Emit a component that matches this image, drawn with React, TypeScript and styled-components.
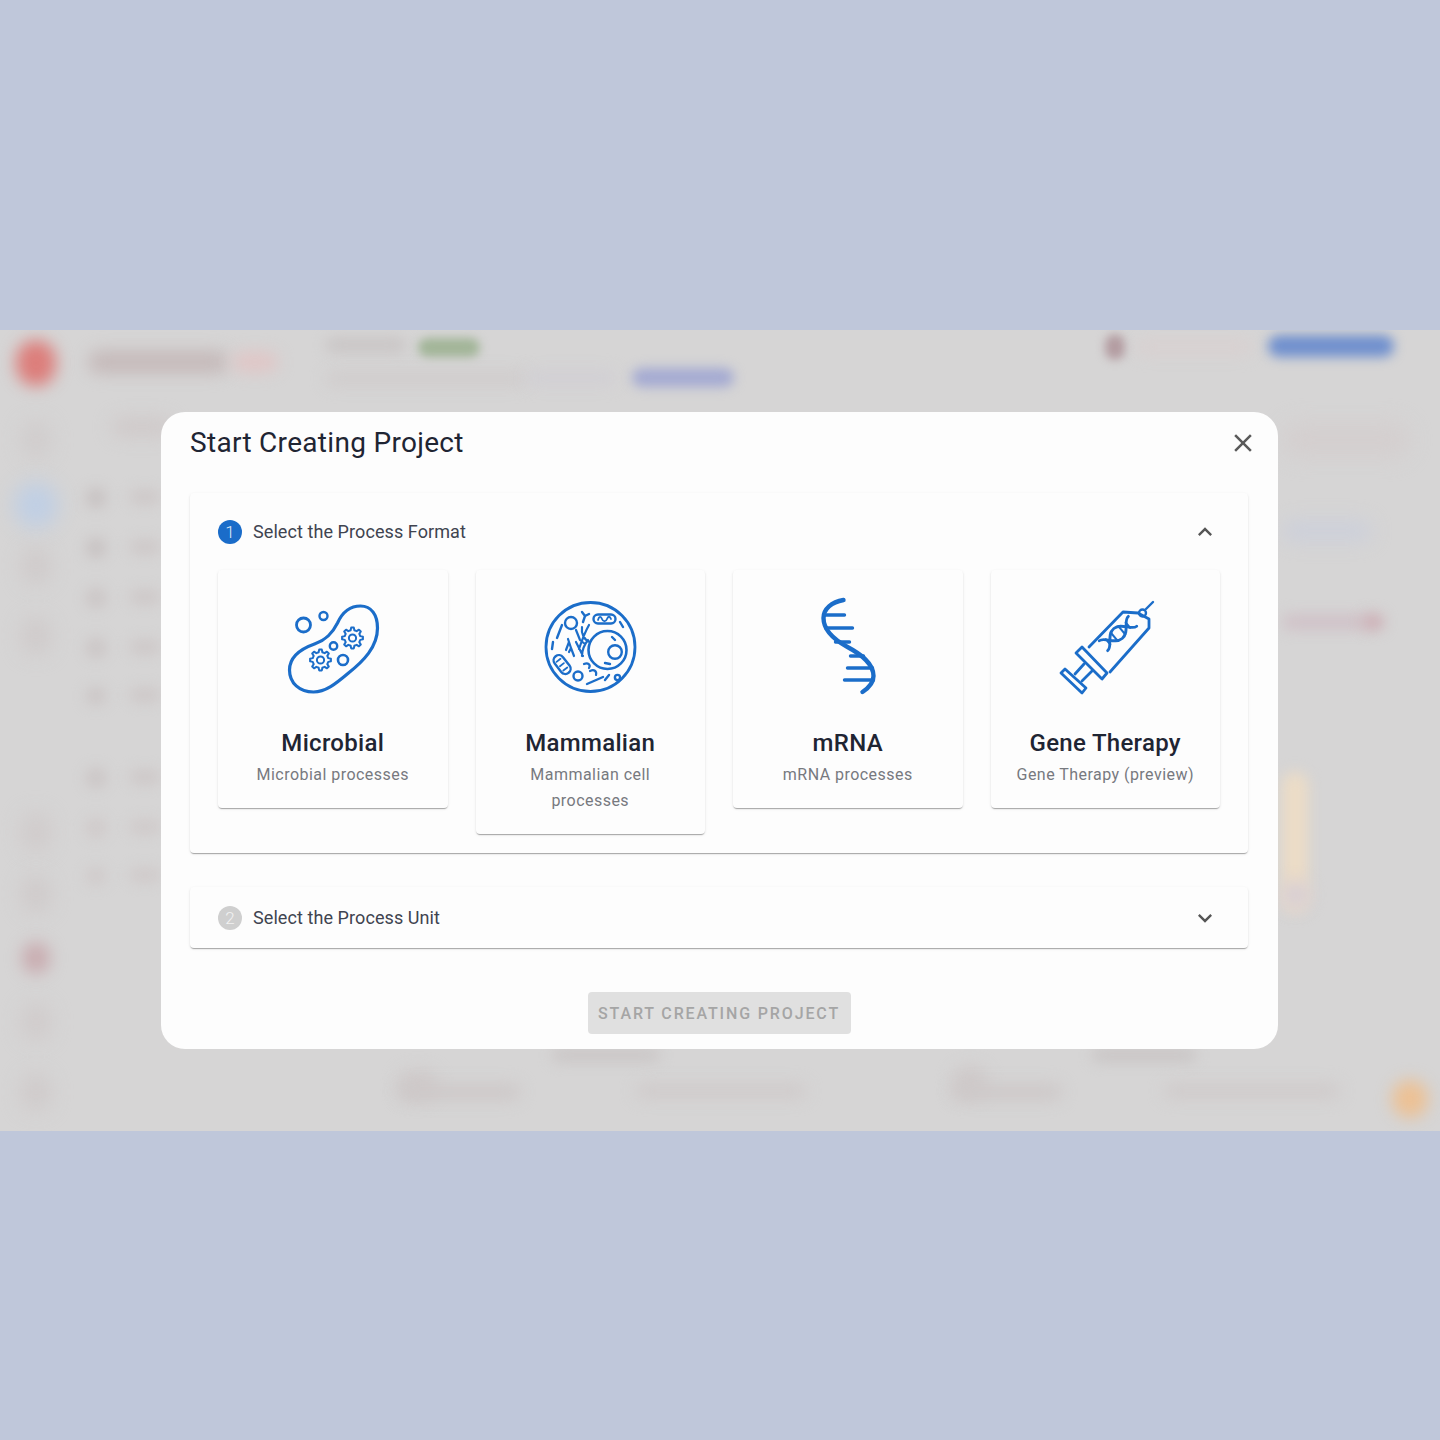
import React from 'react';
import styled, { createGlobalStyle } from 'styled-components';

const GlobalStyle = createGlobalStyle`
  html, body {
    margin: 0;
    padding: 0;
    background: #bfc7da;
    font-family: Roboto, "Liberation Sans", sans-serif;
  }
`;

const Page = styled.div`
  width: 1440px;
  height: 1440px;
  box-sizing: border-box;
  padding-top: 330px;
`;

const Band = styled.div`
  position: relative;
  width: 1440px;
  height: 801px;
  overflow: hidden;
  background: #d6d5d5;
  display: flex;
  align-items: center;
  justify-content: center;
`;

const Blob = styled.div<{ $x: number; $y: number; $w: number; $h: number; $c: string; $b: number }>`
  position: absolute;
  left: ${(p) => p.$x}px;
  top: ${(p) => p.$y - 330}px;
  width: ${(p) => p.$w}px;
  height: ${(p) => p.$h}px;
  background: ${(p) => p.$c};
  border-radius: ${(p) => Math.min(p.$w, p.$h) / 2}px;
  filter: blur(${(p) => p.$b}px);
`;

const Modal = styled.div`
  position: relative;
  width: 1117px;
  height: 637px;
  margin-right: 1px;
  box-sizing: border-box;
  padding: 0 30px 0 29px;
  background: #fdfdfd;
  border-radius: 24px;
`;

const ModalHead = styled.div`
  height: 81px;
  box-sizing: border-box;
  padding-top: 14px;
  display: flex;
  justify-content: space-between;
  align-items: flex-start;
`;

const Title = styled.h2`
  margin: 0;
  font-size: 28px;
  line-height: 34px;
  font-weight: 400;
  letter-spacing: 0.3px;
  color: #1f2533;
`;

const CloseButton = styled.div`
  width: 30px;
  height: 30px;
  margin: 2px -10px 0 0;
  color: #5a5a5a;
`;

const Section = styled.section`
  background: #fdfdfd;
  border-radius: 4px;
  box-shadow: 0 2px 1px -1px rgba(0, 0, 0, 0.22), 0 1px 1px 0 rgba(0, 0, 0, 0.1), 0 1px 3px 0 rgba(0, 0, 0, 0.1);
  margin-bottom: 34px;
`;

const SectionHead = styled.div<{ $open?: boolean }>`
  height: ${(p) => (p.$open ? 77 : 61)}px;
  box-sizing: border-box;
  padding: 0 29px 0 28px;
  display: flex;
  align-items: center;
`;

const StepBadge = styled.div<{ $active?: boolean }>`
  width: 24px;
  height: 24px;
  border-radius: 50%;
  background: ${(p) => (p.$active ? '#1a6cc9' : '#cfcfcf')};
  color: ${(p) => (p.$active ? '#dfe9f6' : '#f2f2f2')};
  font-size: 17px;
  font-weight: 300;
  line-height: 25px;
  text-align: center;
`;

const StepLabel = styled.div`
  flex: 1;
  margin-left: 11px;
  font-size: 18px;
  line-height: 24px;
  letter-spacing: 0.08px;
  color: #3f4450;
`;

const Chevron = styled.div`
  width: 28px;
  height: 28px;
  color: #555;
`;

const CardGrid = styled.div`
  display: grid;
  grid-template-columns: repeat(4, 1fr);
  gap: 28px;
  align-items: start;
  padding: 0 28px 19px;
`;

const Card = styled.div`
  box-sizing: border-box;
  padding: 20px 24px 20px;
  background: #fdfdfd;
  border-radius: 4px;
  box-shadow: 0 2px 1px -1px rgba(0, 0, 0, 0.22), 0 1px 1px 0 rgba(0, 0, 0, 0.1), 0 1px 3px 0 rgba(0, 0, 0, 0.1);
  text-align: center;
`;

const IconSvg = styled.svg`
  display: block;
  width: 120px;
  height: 110px;
  margin: 0 auto 27px;
  color: #1b6dc9;
  fill: none;
  stroke: currentColor;
  stroke-linecap: round;
  stroke-linejoin: round;
`;

const CardName = styled.div`
  font-size: 24px;
  line-height: 32px;
  font-weight: 500;
  letter-spacing: 0.3px;
  color: #1f2533;
`;

const CardDesc = styled.div`
  font-size: 16px;
  line-height: 26px;
  margin-top: 3px;
  letter-spacing: 0.46px;
  color: #77797f;
`;

const Footer = styled.div`
  display: flex;
  justify-content: center;
  padding-top: 10px;
`;

const StartButton = styled.button`
  width: 263px;
  height: 42px;
  padding: 0;
  border: none;
  border-radius: 4px;
  background: #e0e0e0;
  color: #a5a5a5;
  font-family: inherit;
  font-size: 16px;
  font-weight: 500;
  letter-spacing: 1.86px;
  text-transform: uppercase;
`;

const blobs: [number, number, number, number, string, number][] = [
  [16, 340, 40, 46, '#dc7e7b', 8],
  [88, 350, 140, 24, '#c6bbbb', 8],
  [232, 352, 46, 20, '#e0c6c6', 8],
  [326, 338, 80, 14, '#c8c4c4', 7],
  [418, 338, 62, 19, '#a2b598', 5],
  [326, 372, 200, 13, '#cfcbcb', 8],
  [526, 372, 90, 12, '#d0ced4', 8],
  [632, 368, 102, 19, '#a4aad2', 6],
  [1105, 334, 20, 26, '#b39ca1', 5],
  [1136, 340, 116, 14, '#d9d0d0', 8],
  [1268, 335, 126, 22, '#7090ce', 6],
  [1282, 422, 128, 36, '#d4cfcf', 10],
  [1282, 520, 90, 22, '#cdd0da', 9],
  [1282, 614, 86, 16, '#d0c2c8', 7],
  [1362, 614, 22, 16, '#cdadb4', 7],
  [1282, 772, 26, 140, '#ecdcc6', 7],
  [1282, 880, 28, 30, '#d8cfd4', 8],
  [112, 418, 60, 18, '#cfc9c9', 9],
  [22, 422, 28, 36, '#d0cccc', 10],
  [14, 482, 44, 46, '#c0cfe4', 10],
  [22, 548, 28, 36, '#cfcaca', 10],
  [22, 618, 28, 36, '#cfcaca', 10],
  [86, 488, 20, 20, '#c6c0c0', 7],
  [130, 490, 30, 14, '#cdc7c7', 7],
  [86, 538, 20, 20, '#c6c0c0', 7],
  [130, 540, 30, 14, '#cdc7c7', 7],
  [86, 588, 20, 20, '#cac4c4', 7],
  [130, 590, 30, 14, '#cdc7c7', 7],
  [86, 638, 20, 20, '#cac4c4', 7],
  [130, 640, 30, 14, '#cdc7c7', 7],
  [86, 688, 20, 16, '#cac4c4', 7],
  [130, 688, 30, 14, '#cdc7c7', 7],
  [86, 768, 20, 20, '#cac4c4', 7],
  [130, 770, 30, 14, '#cdc7c7', 7],
  [86, 818, 20, 20, '#cfc9c9', 7],
  [130, 820, 30, 14, '#cfc9c9', 7],
  [86, 868, 20, 16, '#cfc9c9', 7],
  [130, 868, 30, 14, '#cfc9c9', 7],
  [22, 813, 28, 38, '#d0cbcb', 10],
  [22, 876, 28, 36, '#cfcaca', 10],
  [22, 942, 28, 32, '#c9adb1', 8],
  [22, 1004, 28, 36, '#d0cbcb', 10],
  [22, 1074, 28, 36, '#cfcaca', 10],
  [552, 1048, 108, 14, '#cac6c6', 7],
  [398, 1070, 40, 30, '#cfcaca', 8],
  [398, 1084, 122, 16, '#cdc8c8', 8],
  [636, 1084, 170, 14, '#cfcaca', 8],
  [952, 1066, 36, 32, '#cfcaca', 8],
  [952, 1084, 110, 16, '#cdc8c8', 8],
  [1092, 1048, 104, 14, '#c9c5c5', 7],
  [1164, 1084, 176, 14, '#cfcaca', 8],
  [1392, 1080, 36, 38, '#ecc195', 8],
];

// cog outline used by the microbial icon
const gearPoints = (cx: number, cy: number, r: number, teeth: number) => {
  const pts: string[] = [];
  const inner = r * 0.76;
  for (let i = 0; i < teeth; i++) {
    const step = (Math.PI * 2) / teeth;
    const a = i * step;
    [
      [inner, a - step * 0.3],
      [r, a - step * 0.16],
      [r, a + step * 0.16],
      [inner, a + step * 0.3],
    ].forEach(([rad, ang]) => {
      pts.push(`${(cx + rad * Math.cos(ang)).toFixed(2)},${(cy + rad * Math.sin(ang)).toFixed(2)}`);
    });
  }
  return pts.join(' ');
};

const MicrobialIcon = () => (
  <IconSvg viewBox="0 0 120 110">
    <g transform="translate(2.5 5)">
      <path
        strokeWidth="3.2"
        d="M14 75C14 62 25 54 39 49C51 45 57 38 62 28C67 17 75 11 85 11C96 11 102 20 102 33C102 52 88 66 73 78C60 89 50 97 38 97C24 97 14 88 14 75Z"
      />
      <circle cx="28" cy="30" r="7" strokeWidth="2.8" />
      <circle cx="48" cy="21" r="4" strokeWidth="2.4" />
      <circle cx="58" cy="51" r="3.7" strokeWidth="2.4" />
      <circle cx="67.5" cy="65" r="5" strokeWidth="2.6" />
      <polygon points={gearPoints(77, 43, 10.5, 8)} strokeWidth="2" />
      <circle cx="77" cy="43" r="3.6" strokeWidth="2" />
      <polygon points={gearPoints(45, 65, 10.5, 8)} strokeWidth="2" />
      <circle cx="45" cy="65" r="3.6" strokeWidth="2" />
    </g>
  </IconSvg>
);

const CellIcon = () => (
  <IconSvg viewBox="0 0 120 110">
    <circle cx="60.5" cy="57" r="44.500" strokeWidth="2.8" />
    <circle cx="77.500" cy="60" r="19" strokeWidth="2.6" />
    <circle cx="85" cy="62" r="6.800" strokeWidth="2.4" />
    <circle cx="41" cy="33" r="6" strokeWidth="2.4" />
    <circle cx="48" cy="86" r="4.500" strokeWidth="2.4" />
    <circle cx="87.500" cy="87.500" r="2.600" strokeWidth="2.4" />
    <rect x="63.500" y="24.500" width="22" height="9" rx="4.500" strokeWidth="2.4" />
    <path strokeWidth="1.8" d="M68 30C69 26 71 26 72 29C73 32 76 32 77 29C78 26 80 26 81 29" />
    <g transform="rotate(52 32 74)">
      <rect x="22" y="69" width="21" height="10.500" rx="5.200" strokeWidth="2.4" />
      <path strokeWidth="1.8" d="M27 77V72M32.500 77V72M38 77V72" />
    </g>
    <path strokeWidth="2.4" d="M32 35L27 48M23 52L22 59M52 22L55 26L53 32M55 26L59 24M90 32L93 37" />
    <path strokeWidth="2.4" d="M57 94L73 87M75 90L79 85M82 47L85 50M75 73L80 74" />
    <path strokeWidth="2.2" d="M38 49L41 58L39 62M41 58L44 66M39 52L36 60" />
    <path strokeWidth="2.2" d="M46 40L50 50L55 54M52 37C51 44 54 50 60 52M59 35C55 42 52 50 49 59M52 66C52 60 54 55 58 50M46 52L53 66" />
    <path strokeWidth="2.2" d="M54 74C58 72 61 75 59 78M60 81C64 79 67 81 66 85" />
  </IconSvg>
);

const DnaIcon = () => (
  <IconSvg viewBox="0 0 120 110">
    <g transform="translate(12.5 -10)">
      <path
        strokeWidth="4.4"
        d="M43 20C31 22 23 29 23 38C23 52 36 61 47 67C60 74 73 83 73 96C73 102 68 108 62 112"
      />
      <path strokeWidth="3.4" d="M25 35H44M25 48H52M35 62H49M50 76H63M47 88H72M44 100H73" />
    </g>
  </IconSvg>
);

const SyringeIcon = () => (
  <IconSvg viewBox="0 0 120 110">
    <g transform="translate(5 0)">
      <path strokeWidth="2.8" d="M39 57L73 22L88 23L99 29L99 38L60 82" />
      <path strokeWidth="2.8" d="M26 63L32 57L57 83L52 89Z" />
      <path strokeWidth="2.8" d="M34 74L25 84M42 81L32 91" />
      <path strokeWidth="2.8" d="M11 83L15 79L36 98L32 103Z" />
      <circle cx="92.500" cy="23" r="3.500" strokeWidth="2.4" />
      <path strokeWidth="2.4" d="M96 19L103 12" />
      <g transform="rotate(-40 68 43.500)">
        <path strokeWidth="2.8" d="M49 37C56 37 58 50 68 50C78 50 80 37 87 37" />
        <path strokeWidth="2.8" d="M49 50C56 50 58 37 68 37C78 37 80 50 87 50" />
        <path strokeWidth="2" d="M55 40V47M63 38V49M73 38V49M81 40V47" />
      </g>
    </g>
  </IconSvg>
);

const cards = [
  { name: 'Microbial', desc: 'Microbial processes', Icon: MicrobialIcon },
  { name: 'Mammalian', desc: 'Mammalian cell processes', Icon: CellIcon },
  { name: 'mRNA', desc: 'mRNA processes', Icon: DnaIcon },
  { name: 'Gene Therapy', desc: 'Gene Therapy (preview)', Icon: SyringeIcon },
];

const MuiIcon = ({ d }: { d: string }) => (
  <svg viewBox="0 0 24 24" width="100%" height="100%" fill="currentColor">
    <path d={d} />
  </svg>
);

export default function App() {
  return (
    <Page>
      <GlobalStyle />
      <Band>
        {blobs.map(([x, y, w, h, c, b], i) => (
          <Blob key={i} $x={x} $y={y} $w={w} $h={h} $c={c} $b={b} />
        ))}
        <Modal>
          <ModalHead>
            <Title>Start Creating Project</Title>
            <CloseButton>
              <MuiIcon d="M19 6.41 17.59 5 12 10.59 6.41 5 5 6.41 10.59 12 5 17.59 6.41 19 12 13.41 17.59 19 19 17.59 13.41 12z" />
            </CloseButton>
          </ModalHead>
          <Section>
            <SectionHead $open>
              <StepBadge $active>1</StepBadge>
              <StepLabel>Select the Process Format</StepLabel>
              <Chevron>
                <MuiIcon d="M12 8l-6 6 1.41 1.41L12 10.83l4.59 4.58L18 14z" />
              </Chevron>
            </SectionHead>
            <CardGrid>
              {cards.map(({ name, desc, Icon }) => (
                <Card key={name}>
                  <Icon />
                  <CardName>{name}</CardName>
                  <CardDesc>{desc}</CardDesc>
                </Card>
              ))}
            </CardGrid>
          </Section>
          <Section>
            <SectionHead>
              <StepBadge>2</StepBadge>
              <StepLabel>Select the Process Unit</StepLabel>
              <Chevron>
                <MuiIcon d="M16.59 8.59 12 13.17 7.41 8.59 6 10l6 6 6-6z" />
              </Chevron>
            </SectionHead>
          </Section>
          <Footer>
            <StartButton disabled>Start Creating Project</StartButton>
          </Footer>
        </Modal>
      </Band>
    </Page>
  );
}
